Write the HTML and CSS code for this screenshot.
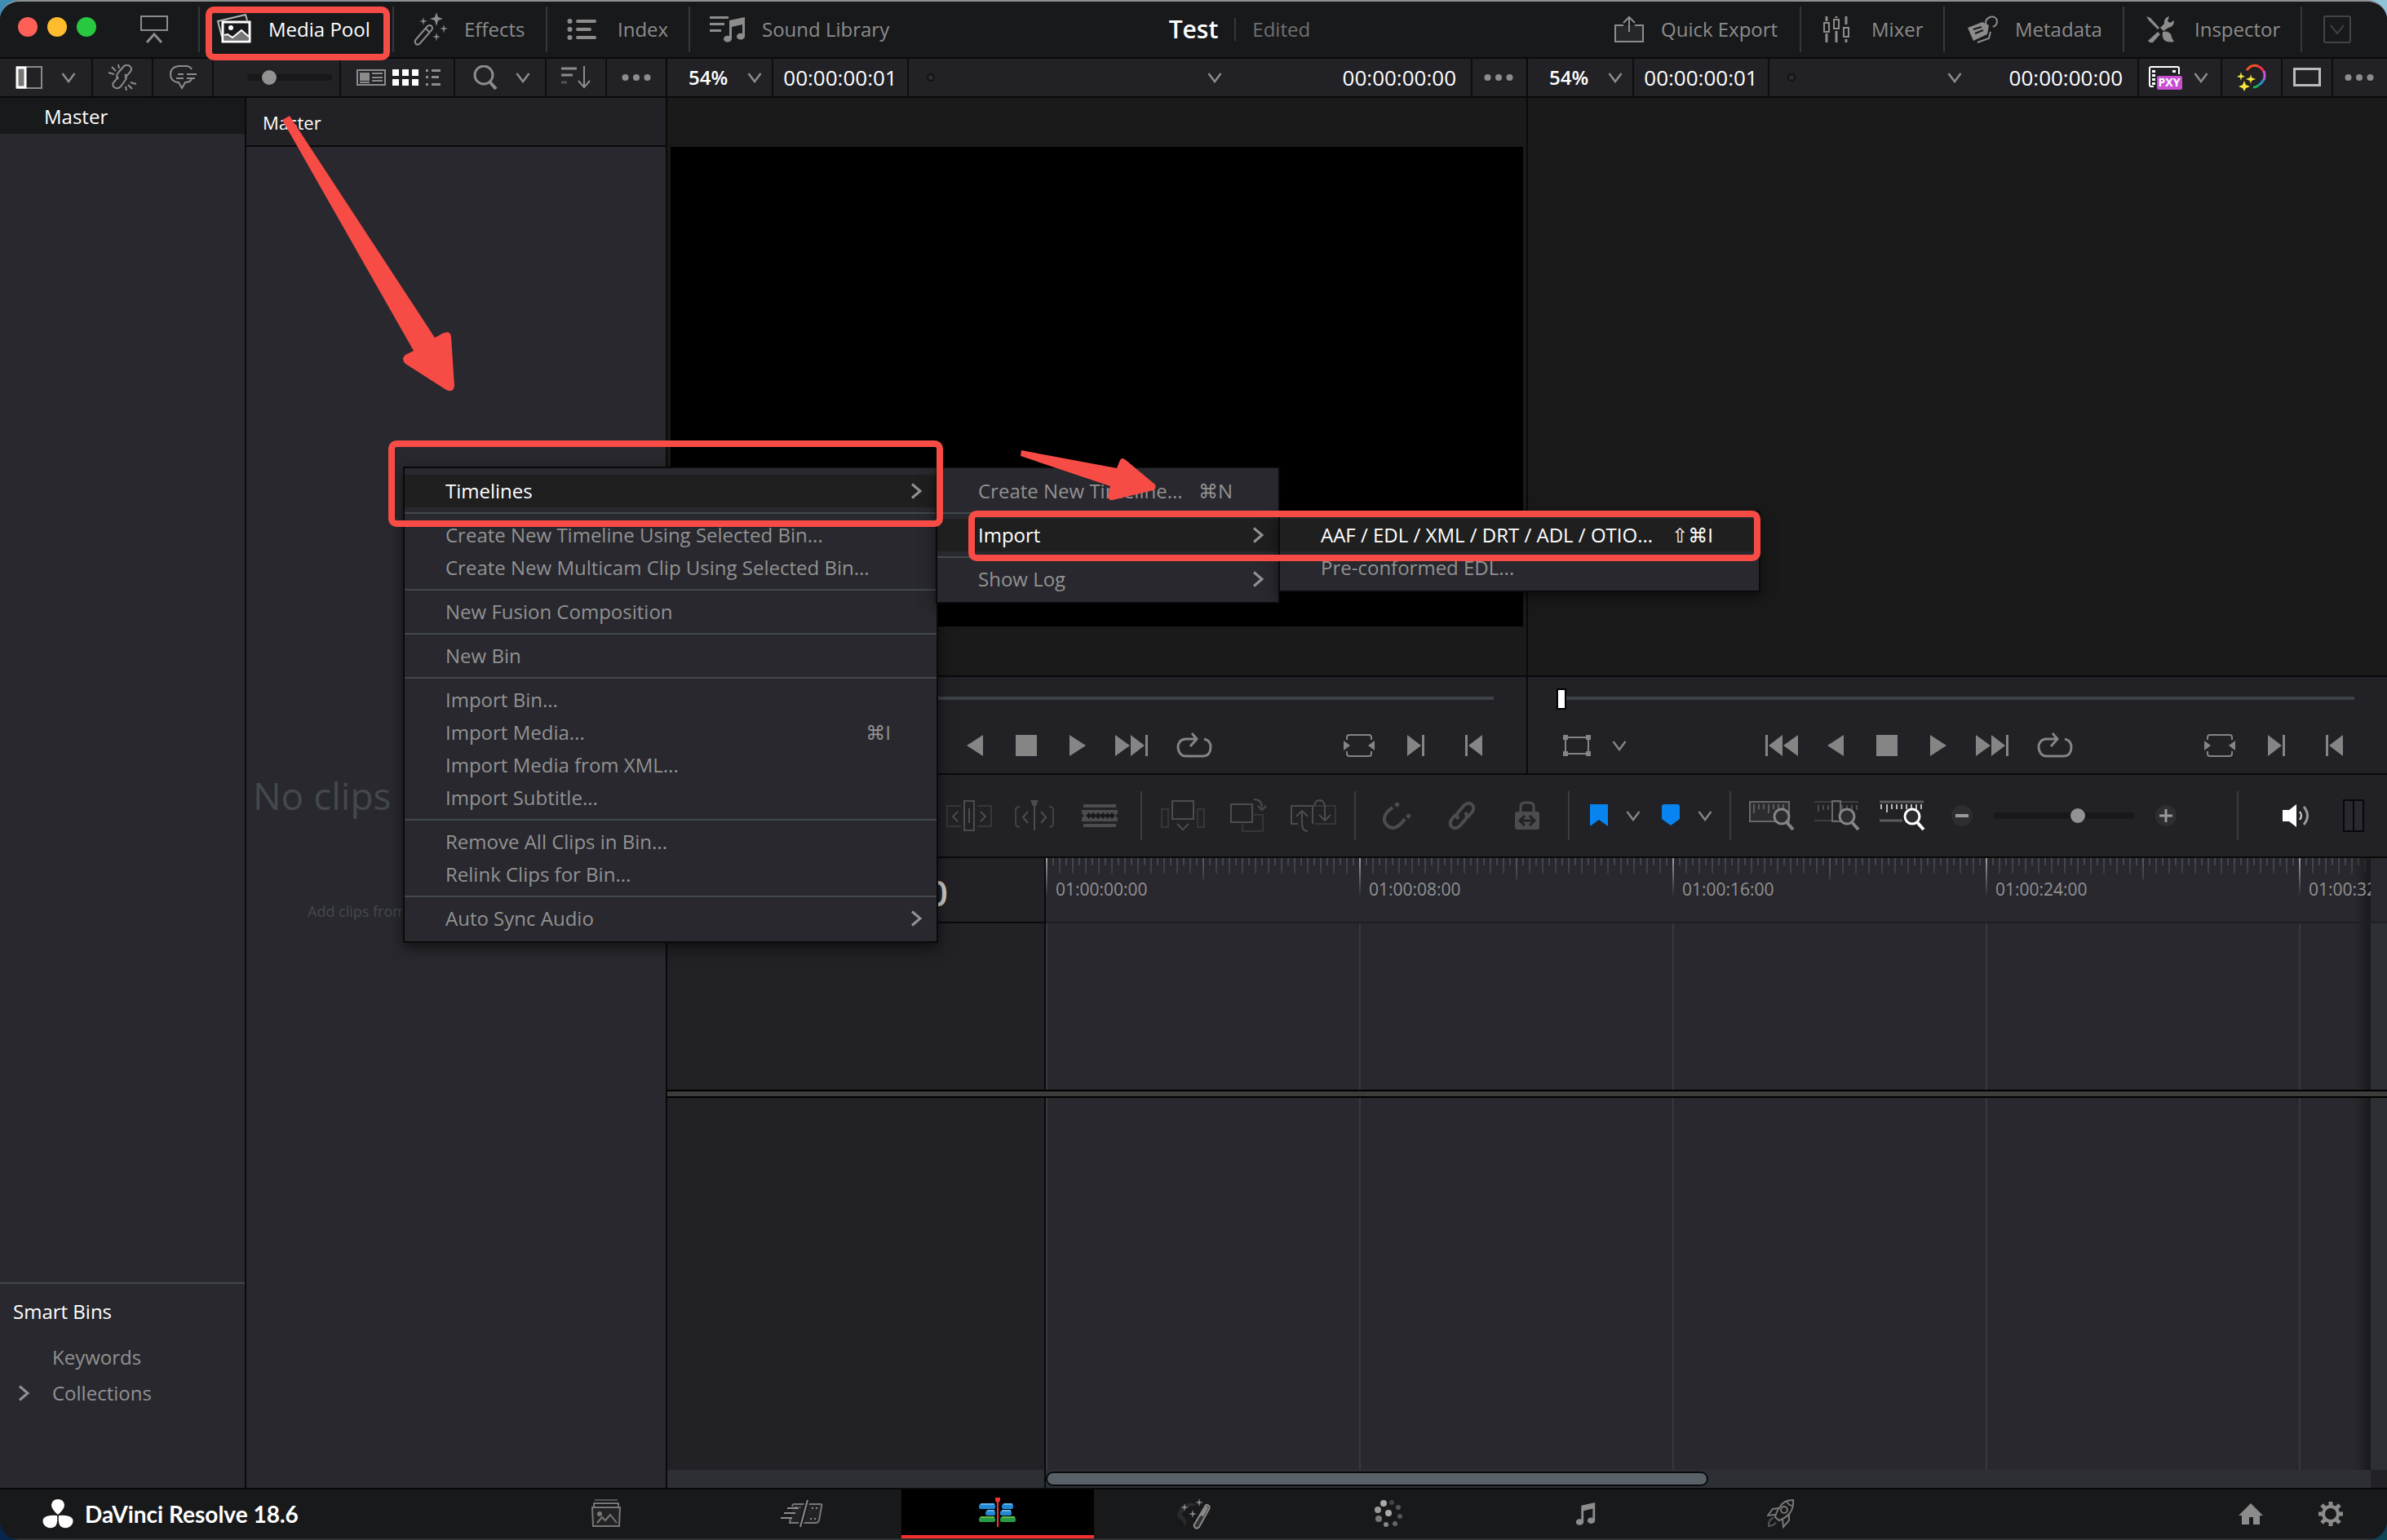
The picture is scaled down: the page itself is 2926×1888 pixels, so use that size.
FILE: index.html
```html
<!DOCTYPE html>
<html lang="en">
<head>
<meta charset="utf-8">
<title>Test - DaVinci Resolve</title>
<link rel="stylesheet" href="styles.css">
</head>
<body>
<svg class="sprite" aria-hidden="true">
  <symbol id="chev" viewBox="0 0 18 14"><path d="M1.500 2l7.500 10 7.500-10" fill="none" stroke="currentColor" stroke-width="2.500"/></symbol>
  <symbol id="chev-r" viewBox="0 0 14 20"><path d="M2 1.500l10 8.500-10 8.500" fill="none" stroke="currentColor" stroke-width="3"/></symbol>
  <symbol id="dots" viewBox="0 0 36 10"><g fill="currentColor"><circle cx="4.500" cy="5" r="4"/><circle cx="18" cy="5" r="4"/><circle cx="31.500" cy="5" r="4"/></g></symbol>
  <symbol id="first" viewBox="0 0 42 26"><path d="M1 0h3v26H1zM22 0v26L5 13zM41 0v26L23 13z" fill="currentColor"/></symbol>
  <symbol id="back" viewBox="0 0 20 26"><path d="M20 0v26L0 13z" fill="currentColor"/></symbol>
  <symbol id="stop" viewBox="0 0 26 26"><path d="M0 0h26v26H0z" fill="currentColor"/></symbol>
  <symbol id="play" viewBox="0 0 20 26"><path d="M0 0v26l20-13z" fill="currentColor"/></symbol>
  <symbol id="last" viewBox="0 0 42 26"><path d="M38 0h3v26h-3zM20 0v26l17-13zM1 0v26l18-13z" fill="currentColor"/></symbol>
  <symbol id="loop" viewBox="0 0 44 32"><path d="M13 8h-1.500C5 8 2 13 2 18s3 11 9.500 11h21C39 29 42 24 42 18S39 9 34 8M12 8h12M19 1l6 7-8 9" fill="none" stroke="currentColor" stroke-width="3"/></symbol>
  <symbol id="match" viewBox="0 0 40 28"><path d="M5 7V4q0-3 3-3h24q3 0 3 3v3M5 21v3q0 3 3 3h24q3 0 3-3v-3" fill="none" stroke="currentColor" stroke-width="2"/><path d="M1 8l8 6-8 6zM39 8l-8 6 8 6z" fill="currentColor"/></symbol>
  <symbol id="next" viewBox="0 0 22 26"><path d="M0 0v26l17-13zM18 0h3v26h-3z" fill="currentColor"/></symbol>
  <symbol id="prev" viewBox="0 0 22 26"><path d="M22 0v26L5 13zM1 0h3v26H1z" fill="currentColor"/></symbol>
  <symbol id="crop" viewBox="0 0 36 28"><path d="M4 4h28v20H4z" fill="none" stroke="currentColor" stroke-width="2"/><path d="M1 1h6v6H1zM29 1h6v6h-6zM1 21h6v6H1zM29 21h6v6h-6z" fill="currentColor"/></symbol>
  <symbol id="note" viewBox="0 0 28 32"><path d="M9 5l18-4v23a5 4 0 1 1-3-3V9l-12 3v15a5 4 0 1 1-3-4z" fill="currentColor"/></symbol>
  <symbol id="lens" viewBox="0 0 28 30"><circle cx="12" cy="12" r="9" fill="#2b2b30" stroke="currentColor" stroke-width="3"/><path d="M18 19l8 9" stroke="currentColor" stroke-width="4"/></symbol>
</svg>

<div class="window">
  <header class="titlebar">
    <div class="bar-left">
      <div class="lights"><i class="red"></i><i class="amber"></i><i class="green"></i></div>
      <button class="display" aria-label="Display"><svg width="36" height="36" viewBox="0 0 36 36"><path d="M2 2h32v17H2z" fill="none" stroke="currentColor" stroke-width="2"/><path d="M9 34l9-10 9 10" fill="none" stroke="currentColor" stroke-width="3"/></svg></button>
      <button class="tab tab-media on"><svg width="44" height="38" viewBox="0 0 44 38"><path d="M7 28L2 9l34-8 2 7" fill="none" stroke="#b5b5b5" stroke-width="2"/><path d="M8 10h33v24H8z" fill="#18191b" stroke="#fff" stroke-width="3"/><circle cx="18" cy="17" r="3" fill="#fff"/><path d="M10 32v-6l4-1 6 4 11-9 9 8v4z" fill="#777"/><path d="M10 26l4-1 6 4 11-9 9 8" fill="none" stroke="#fff" stroke-width="2"/></svg>Media Pool</button>
      <button class="tab tab-effects"><svg width="42" height="42" viewBox="0 0 42 42"><path d="M3 39q-3-3 1-7l13-15q3-2 5 0t0 5L8 38q-3 3-5 1zM15 20l4 4" fill="none" stroke="currentColor" stroke-width="2"/><path d="M28 0l2 6 6 2-6 2-2 7-2-7-6-2 6-2zM12 6l1 4 4 1-4 1-1 4-1-4-4-1 4-1zM37 15l1 4 4 1-4 1-1 5-1-5-4-1 4-1zM28 25l1 4 4 1-4 1-1 5-1-5-4-1 4-1z" fill="currentColor"/></svg>Effects</button>
      <button class="tab tab-index"><svg width="36" height="28" viewBox="0 0 36 28"><g fill="currentColor"><circle cx="3.500" cy="4" r="3"/><circle cx="3.500" cy="14" r="3"/><circle cx="3.500" cy="24" r="3"/><rect x="11" y="2" width="25" height="4" rx="2"/><rect x="11" y="12" width="19" height="4" rx="2"/><rect x="11" y="22" width="25" height="4" rx="2"/></g></svg>Index</button>
      <button class="tab tab-sound"><svg width="44" height="34" viewBox="0 0 44 34"><path d="M0 1h23v3H0zM0 9h18v3H0zM0 17h14v3H0z" fill="currentColor"/><path d="M24 6l19-4v24a5 4 0 1 1-3-4V11l-13 3v15a5 4 0 1 1-3-4z" fill="currentColor"/></svg>Sound Library</button>
    </div>
    <h1>Test</h1>
    <div class="bar-right">
      <span class="edited">Edited</span>
      <button class="tab tab-export"><svg width="38" height="34" viewBox="0 0 38 34"><path d="M12 12H2v20h34V12H26" fill="#26272a" stroke="currentColor" stroke-width="2"/><path d="M19 20V3M12 9l7-7 7 7" fill="none" stroke="currentColor" stroke-width="2"/></svg>Quick Export</button>
      <button class="tab tab-mixer"><svg width="34" height="34" viewBox="0 0 34 34"><path d="M5 1v6M5 22v11M17 1v2M17 19v14M29 1v10M29 29v4" stroke="currentColor" stroke-width="3"/><path d="M2 9h6v11H2zM14 5h6v11h-6zM26 15h6v11h-6z" fill="none" stroke="currentColor" stroke-width="2"/></svg>Mixer</button>
      <button class="tab tab-meta"><svg width="40" height="34" viewBox="0 0 40 34"><path d="M2 15L20 8l8 4-2 11L9 31z" fill="currentColor"/><path d="M9 17l10-3M11 22l10-4" stroke="#18191b" stroke-width="2"/><path d="M30 20l-2 8-14 5M26 14q-5-8 3-12 8-2 9 5 0 5-5 7" fill="none" stroke="currentColor" stroke-width="2"/></svg>Metadata</button>
      <button class="tab tab-inspector"><svg width="36" height="34" viewBox="0 0 36 34"><path d="M1 1l5 2 11 12-2 2L4 6zM15 20l3 3-9 10q-4 1-6-2zM18 15l5-5q-1-7 6-9l-2 6 3 2 5-3q0 8-7 9l-6 4z" fill="currentColor"/><path d="M21 20q6-2 10 3 1 5 4 9-9 2-13-3-2-4-1-9z" fill="currentColor"/></svg>Inspector</button>
      <button class="expand" aria-label="Expand"><svg width="36" height="34" viewBox="0 0 36 34"><rect x="2" y="1" width="32" height="32" rx="2" fill="none" stroke="currentColor" stroke-width="2"/><path d="M10 12l8 10 8-10" fill="none" stroke="currentColor" stroke-width="2"/></svg></button>
    </div>
  </header>

  <main class="workspace">
    <section class="pool">
      <div class="toolbar">
        <button class="cell c-panel" aria-label="Bin list"><svg width="34" height="28" viewBox="0 0 34 28"><path d="M2 1h30v26H2z" fill="none" stroke="#8a8a8a" stroke-width="2"/><path d="M2 2h10v24H2z" fill="#777" stroke="#fff" stroke-width="3"/></svg><svg width="18" height="14"><use href="#chev"/></svg></button>
        <button class="cell c-std" aria-label="Unlink"><svg width="36" height="32" viewBox="0 0 36 32"><path d="M13 18q-4-3 0-8l6-7q4-4 8-1t0 8l-6 6M21 12q4 3 0 8l-5 7q-4 4-8 1t1-8l4-5M1 10l7 2M5 3l5 5M13 0l1 5M35 24l-7-2M30 30l-5-5M23 32l-1-5" fill="none" stroke="currentColor" stroke-width="2"/></svg></button>
        <button class="cell c-std" aria-label="Comments"><svg width="34" height="30" viewBox="0 0 34 30"><path d="M28 5q-2-4-7-4h-9Q2 2 2 11q0 8 8 10h2l4 7 4-7q6 0 8-4" fill="none" stroke="currentColor" stroke-width="2"/><path d="M11 11h7M22 11h12M9 16h9M22 16h10" stroke="currentColor" stroke-width="2"/></svg></button>
        <div class="cell c-size"><input class="slider" type="range" aria-label="Thumbnail size" min="0" max="100" value="21"></div>
        <div class="cell c-views">
          <button aria-label="Metadata view"><svg width="36" height="20" viewBox="0 0 36 20"><path d="M1 1h34v18H1z" fill="none" stroke="currentColor" stroke-width="2"/><path d="M4 4h12v10H4zM19 4h13v2H19zM19 9h13v2H19zM19 13h13v2H19zM4 15h12v2H4z" fill="currentColor"/></svg></button>
          <button class="on" aria-label="Thumbnail view"><svg width="32" height="20" viewBox="0 0 32 20"><path d="M0 0h8v8H0zM12 0h8v8h-8zM24 0h8v8h-8zM0 12h8v8H0zM12 12h8v8h-8zM24 12h8v8h-8z" fill="#fff"/></svg></button>
          <button aria-label="List view"><svg width="20" height="20" viewBox="0 0 20 20"><path d="M1 0h3v3H1zM8 0h11v3H8zM1 8h3v3H1zM8 8h9v3H8zM1 17h3v3H1zM8 17h11v3H8z" fill="currentColor"/></svg></button>
        </div>
        <button class="cell c-search" aria-label="Search"><svg width="30" height="30" viewBox="0 0 30 30"><circle cx="13" cy="12" r="11" fill="none" stroke="currentColor" stroke-width="3"/><path d="M20 20l8 9" stroke="currentColor" stroke-width="4"/></svg><svg width="18" height="14"><use href="#chev"/></svg></button>
        <button class="cell c-std" aria-label="Sort"><svg width="36" height="28" viewBox="0 0 36 28"><path d="M0 3h19M0 11h14" stroke="currentColor" stroke-width="3"/><path d="M0 20h7" stroke="#555" stroke-width="3"/><path d="M28 0v25M21 18l7 8 7-8" fill="none" stroke="currentColor" stroke-width="2"/></svg></button>
        <button class="cell c-last" aria-label="Options"><svg width="36" height="10"><use href="#dots"/></svg></button>
      </div>
      <div class="pool-body">
        <nav class="bins">
          <a class="bin-master" href="#master">Master</a>
          <div class="smart">
            <h2>Smart Bins</h2>
            <a href="#keywords">Keywords</a>
            <a href="#collections"><svg width="14" height="20"><use href="#chev-r"/></svg>Collections</a>
          </div>
        </nav>
        <div class="clips">
          <h2>Master</h2>
          <div class="empty"><p class="big">No clips in media pool</p><p class="small">Add clips from Media Storage to get started</p></div>
        </div>
      </div>
    </section>

    <div class="right">
      <div class="viewers">
        <section class="viewer">
          <div class="toolbar">
            <label class="cell v-zoom"><select aria-label="Source zoom"><option>54%</option></select><svg width="18" height="14"><use href="#chev"/></svg></label>
            <div class="cell v-tc">00:00:00:01</div>
            <div class="cell v-name"><i class="dot"></i><button class="pick far" aria-label="Clip"><svg width="18" height="14"><use href="#chev"/></svg></button><span>00:00:00:00</span></div>
            <button class="cell v-dots" aria-label="Options"><svg width="36" height="10"><use href="#dots"/></svg></button>
          </div>
          <div class="screen"><div class="frame"></div></div>
          <div class="controls">
            <input class="scrub" type="range" aria-label="Source position" value="0">
            <div class="transport">
              <div class="t-left"><button class="s48" aria-label="Crop"><svg width="36" height="28"><use href="#crop"/></svg></button><button class="s56" aria-label="Crop mode"><svg width="18" height="14"><use href="#chev"/></svg></button></div>
              <button class="s66" aria-label="First"><svg width="42" height="26"><use href="#first"/></svg></button><button class="s66" aria-label="Reverse"><svg width="20" height="26"><use href="#back"/></svg></button><button class="s60" aria-label="Stop"><svg width="26" height="26"><use href="#stop"/></svg></button><button class="s66" aria-label="Play"><svg width="20" height="26"><use href="#play"/></svg></button><button class="s66" aria-label="Last"><svg width="42" height="26"><use href="#last"/></svg></button><button class="s88" aria-label="Loop"><svg width="44" height="32"><use href="#loop"/></svg></button>
              <div class="t-right"><button class="s70" aria-label="Match frame"><svg width="40" height="28"><use href="#match"/></svg></button><button class="s70" aria-label="Mark in"><svg width="22" height="26"><use href="#next"/></svg></button><button class="s70" aria-label="Mark out"><svg width="22" height="26"><use href="#prev"/></svg></button></div>
            </div>
          </div>
        </section>
        <section class="viewer">
          <div class="toolbar">
            <label class="cell v-zoom"><select aria-label="Timeline zoom"><option>54%</option></select><svg width="18" height="14"><use href="#chev"/></svg></label>
            <div class="cell v-tc">00:00:00:01</div>
            <div class="cell v-name"><i class="dot"></i><button class="pick" aria-label="Timeline"><svg width="18" height="14"><use href="#chev"/></svg></button><span>00:00:00:00</span></div>
            <button class="cell v-proxy" aria-label="Proxy"><svg width="42" height="30" viewBox="0 0 42 30"><path d="M7 26H4q-2 0-2-2V4q0-2 2-2h32q2 0 2 2v7" fill="none" stroke="#fff" stroke-width="2"/><path d="M5 6h4v3H5zM5 11h4v3H5zM5 16h4v3H5zM5 21h4v3H5zM30 6h4v3h-4z" fill="#fff"/><rect x="11" y="13" width="31" height="17" rx="2" fill="#c84fd2"/><text class="pxy" x="26" y="26" text-anchor="middle">PXY</text></svg><svg width="18" height="14"><use href="#chev"/></svg></button>
            <button class="cell v-wheel" aria-label="Bypass grades"><svg width="38" height="34" viewBox="0 0 38 34"><g fill="none" stroke-width="3"><path d="M12 8Q18 0 26 3" stroke="#f35325"/><path d="M25 3q5 1 8 7" stroke="#f0304a"/><path d="M33 9q2 6 0 11" stroke="#c455d8"/><path d="M33 19q-2 5-6 7" stroke="#2f8fd0"/><path d="M27 26q-3 3-7 3" stroke="#18b05a"/></g><path d="M5 10l1 4 4 2-4 1-1 4-1-4-4-1 4-2zM17 13l1 4 5 2-5 2-1 4-1-4-5-2 5-2zM9 21l2 5 5 2-5 2-2 4-2-4-5-2 5-2z" fill="#f5e63c"/></svg></button>
            <button class="cell v-rect" aria-label="Single viewer"><svg width="34" height="24" viewBox="0 0 34 24"><path d="M1.500 1.500h31v20h-31z" fill="none" stroke="#bbb" stroke-width="3"/></svg></button>
            <button class="cell v-dots" aria-label="Options"><svg width="36" height="10"><use href="#dots"/></svg></button>
          </div>
          <div class="screen"></div>
          <div class="controls">
            <input class="scrub" type="range" aria-label="Timeline position" value="0">
            <div class="transport">
              <div class="t-left"><button class="s48" aria-label="Crop"><svg width="36" height="28"><use href="#crop"/></svg></button><button class="s56" aria-label="Crop mode"><svg width="18" height="14"><use href="#chev"/></svg></button></div>
              <button class="s66" aria-label="First"><svg width="42" height="26"><use href="#first"/></svg></button><button class="s66" aria-label="Reverse"><svg width="20" height="26"><use href="#back"/></svg></button><button class="s60" aria-label="Stop"><svg width="26" height="26"><use href="#stop"/></svg></button><button class="s66" aria-label="Play"><svg width="20" height="26"><use href="#play"/></svg></button><button class="s66" aria-label="Last"><svg width="42" height="26"><use href="#last"/></svg></button><button class="s88" aria-label="Loop"><svg width="44" height="32"><use href="#loop"/></svg></button>
              <div class="t-right"><button class="s70" aria-label="Match frame"><svg width="40" height="28"><use href="#match"/></svg></button><button class="s70" aria-label="Mark in"><svg width="22" height="26"><use href="#next"/></svg></button><button class="s70" aria-label="Mark out"><svg width="22" height="26"><use href="#prev"/></svg></button></div>
            </div>
          </div>
        </section>
      </div>

      <div class="edit-tools">
        <div class="group off">
          <button aria-label="Trim"><svg width="56" height="38" viewBox="0 0 56 38"><path d="M18 7H1v25h17M38 7h17v25H38" fill="none" stroke="#35353a" stroke-width="2"/><path d="M14 14l-6 6 6 6M42 14l6 6-6 6M22 1h12v36H22zM28 10v18" fill="none" stroke="currentColor" stroke-width="2"/></svg></button>
          <button aria-label="Dynamic trim"><svg width="52" height="38" viewBox="0 0 52 38"><path d="M8 8q-5 0-5 4v16q0 5 5 5M44 8q5 0 5 4v16q0 5-5 5" fill="none" stroke="#414146" stroke-width="2"/><path d="M18 14l-6 7 6 7M34 14l6 7-6 7M26 4v33" fill="none" stroke="currentColor" stroke-width="2"/><path d="M21 0h10l-3 7h-4z" fill="currentColor"/></svg></button>
          <button aria-label="Blade"><svg width="44" height="28" viewBox="0 0 44 28"><path d="M2 0h40v4H2zM2 24h40v4H2zM0 7h44v4l-3 3 3 3v4H0v-4l3-3-3-3z" fill="currentColor"/><path d="M5 14l4-4 2 3 3-3 3 3 3-3 3 3 3-3 3 3 3-3 2 3 3-3 4 4-4 4-3-3-2 3-3-3-3 3-3-3-3 3-3-3-3 3-3-3-2 3z" fill="#18181b"/></svg></button>
        </div>
        <i class="sep"></i>
        <div class="group off">
          <button aria-label="Insert"><svg width="56" height="38" viewBox="0 0 56 38"><path d="M2 11h8v22H2zM46 11h8v22h-8z" fill="none" stroke="#35353a" stroke-width="2"/><path d="M15 1h26v22H15zM21 29l7 7 7-7" fill="none" stroke="currentColor" stroke-width="2"/></svg></button>
          <button aria-label="Overwrite"><svg width="46" height="42" viewBox="0 0 46 42"><path d="M30 20h11v20H16v-9" fill="none" stroke="#35353a" stroke-width="2"/><path d="M2 7h26v22H2zM30 1q10 0 10 10M35 9l5 5 5-5" fill="none" stroke="currentColor" stroke-width="2"/></svg></button>
          <button aria-label="Replace"><svg width="58" height="42" viewBox="0 0 58 42"><path d="M28 9h28v22H30" fill="none" stroke="#35353a" stroke-width="2"/><path d="M10 31H2V9h26v22M8 22l7-7 7 7M15 16v14q0 10 7 10M30 9q1-7 7-7 6 1 6 9v15M36 20l7 7 7-7" fill="none" stroke="currentColor" stroke-width="2"/></svg></button>
        </div>
        <i class="sep"></i>
        <div class="group off">
          <button aria-label="Snapping"><svg width="36" height="36" viewBox="0 0 36 36"><path d="M13 8Q2 15 3 24q3 9 11 9 7-1 14-11" fill="none" stroke="currentColor" stroke-width="4"/><path d="M18 1l4 3-3 4-4-3zM32 15l4 3-3 4-4-3z" fill="currentColor"/></svg></button>
          <button aria-label="Link"><svg width="34" height="36" viewBox="0 0 34 36"><path d="M13 22q-4-4 0-9l7-8q5-4 9-1t1 9l-6 7M21 14q4 4 0 9l-7 8q-5 4-9 1t-1-9l6-7" fill="none" stroke="currentColor" stroke-width="4"/></svg></button>
          <button aria-label="Lock"><svg width="32" height="36" viewBox="0 0 32 36"><path d="M8 14V7q0-5 5-5h6q5 0 5 5v7" fill="none" stroke="currentColor" stroke-width="3"/><rect x="1" y="13" width="30" height="22" rx="3" fill="currentColor"/><path d="M13 18l-6 6 6 6M19 18l6 6-6 6M8 24h16" fill="none" stroke="#212126" stroke-width="3"/></svg></button>
        </div>
        <i class="sep"></i>
        <div class="pair"><button class="s52" aria-label="Flag"><svg width="24" height="30" viewBox="0 0 24 30"><path d="M1 1h22v27l-11-8-11 8z" fill="#0884f0"/></svg></button><button class="s32" aria-label="Flag color"><svg width="18" height="14"><use href="#chev"/></svg></button></div>
        <div class="pair"><button class="s52" aria-label="Marker"><svg width="24" height="30" viewBox="0 0 24 30"><path d="M1 4q0-3 3-3h16q3 0 3 3v15l-11 8-11-8z" fill="#0884f0"/></svg></button><button class="s32" aria-label="Marker color"><svg width="18" height="14"><use href="#chev"/></svg></button></div>
        <i class="sep"></i>
        <div class="group">
          <button aria-label="Full extent zoom"><svg width="56" height="38" viewBox="0 0 56 38"><path d="M1 2h48v24H1z" fill="#2b2b30" stroke="#68686c" stroke-width="2"/><path d="M6 5v11M12 5v6M18 5v6M24 5v11M30 5v6M36 5v6M42 5v8" stroke="#5c5c60" stroke-width="2"/><svg x="28" y="8" width="28" height="30"><use href="#lens"/></svg></svg></button>
          <button aria-label="Detail zoom"><svg width="56" height="38" viewBox="0 0 56 38"><path d="M0 2h54M0 25h28" stroke="#3c3c41" stroke-width="2"/><path d="M5 6v8M11 6v6M17 6v6M34 6v6M40 6v6M46 6v6M52 6v6" stroke="#4c4c50" stroke-width="2"/><path d="M22 1h10v25H22z" fill="none" stroke="#68686c" stroke-width="2"/><svg x="28" y="8" width="28" height="30"><use href="#lens"/></svg></svg></button>
          <button class="on" aria-label="Custom zoom"><svg width="56" height="38" viewBox="0 0 56 38"><path d="M0 2h54M0 25h28" stroke="#5a5a5f" stroke-width="3"/><path d="M2 5v6M9 5v10M15 5v6M21 5v6M27 5v6M33 5v6M39 5v6M45 5v6M51 5v6" stroke="#bbb" stroke-width="2"/><svg x="28" y="8" width="28" height="30"><use href="#lens"/></svg></svg></button>
        </div>
        <button class="s66 round" aria-label="Zoom out"><svg width="28" height="28" viewBox="0 0 28 28"><circle cx="14" cy="14" r="13" fill="#2d2d32"/><path d="M6 14h16" stroke="#999" stroke-width="4"/></svg></button>
        <input class="slider wide" type="range" aria-label="Timeline scale" min="0" max="100" value="61">
        <button class="s66 round" aria-label="Zoom in"><svg width="28" height="28" viewBox="0 0 28 28"><circle cx="14" cy="14" r="13" fill="#2d2d32"/><path d="M6 14h16M14 6v16" stroke="#999" stroke-width="3"/></svg></button>
        <i class="sep push"></i>
        <button class="speaker on" aria-label="Mute"><svg width="36" height="28" viewBox="0 0 36 28"><path d="M1 7h8l9-7v28l-9-7H1z" fill="#fff"/><path d="M22 9q4 5 0 10" fill="none" stroke="#ddd" stroke-width="2"/><path d="M27 3q9 11 0 22" fill="none" stroke="#999" stroke-width="3"/></svg></button>
        <div class="meter"><i></i><i></i></div>
      </div>

      <div class="timeline">
        <div class="head-top">01:00:00:00</div>
        <div class="ruler"><span>01:00:00:00</span><span>01:00:08:00</span><span>01:00:16:00</span><span>01:00:24:00</span><span>01:00:32:00</span></div>
        <div class="corner"></div>
        <div class="head"></div><div class="lane"></div><div class="vbar"></div>
        <div class="split"></div>
        <div class="head"></div><div class="lane"></div><div class="vbar"></div>
        <div class="foot"></div><div class="hbar"><div class="thumb"></div></div><div class="foot dark"></div>
      </div>
    </div>
  </main>

  <footer class="pages">
    <div class="brand"><svg width="38" height="36" viewBox="0 0 38 36"><path d="M19 19Q11 12 11 7q1-7 8-7t8 7q0 5-8 12zM18 20q1 9-2 13-5 4-11 1-6-4-4-10 4-5 17-4zM20 20q-1 9 2 13 5 4 11 1 6-4 4-10-4-5-17-4z" fill="#fff"/></svg>DaVinci Resolve 18.6</div>
    <nav>
      <a href="#media" aria-label="Media"><svg width="38" height="36" viewBox="0 0 38 36"><path d="M5 1h28" stroke="#555" stroke-width="2"/><path d="M4 9V5h30v4" fill="none" stroke="#777" stroke-width="2"/><path d="M2 10h34l-1 23H3z" fill="#232326" stroke="#777" stroke-width="2"/><circle cx="11" cy="18" r="3" fill="#777"/><path d="M8 29l6-7 4 4 6-7 8 10" fill="none" stroke="#777" stroke-width="2"/></svg></a>
      <a href="#cut" aria-label="Cut"><svg width="52" height="36" viewBox="0 0 52 36"><path d="M15 6h34q2 0 1 3l-3 17q-1 3-4 3H11l1-6M15 6l-1 3" fill="#232326" stroke="#777" stroke-width="2"/><path d="M8 11h14M4 17h14M0 23h14" stroke="currentColor" stroke-width="2"/><path d="M38 11h8M36 24h8M18 10h6" stroke="currentColor" stroke-width="2" stroke-dasharray="2 3"/><path d="M33 1l-9 33" stroke="#18191b" stroke-width="6"/><path d="M33 1l-9 33" stroke="currentColor" stroke-width="2"/></svg></a>
      <a class="current" href="#edit" aria-label="Edit"><svg width="46" height="36" viewBox="0 0 46 36"><rect y="8" width="20" height="6" rx="2" fill="#2387d2"/><rect x="28" y="8" width="14" height="6" rx="2" fill="#2387d2"/><rect x="8" y="16" width="12" height="6" rx="2" fill="#2387d2"/><rect x="26" y="16" width="14" height="6" rx="2" fill="#2387d2"/><rect y="24" width="20" height="6" rx="2" fill="#279a48"/><rect x="26" y="24" width="19" height="6" rx="2" fill="#279a48"/><path d="M2 8h17M30 8h11M10 16h9M28 16h11" stroke="#62b2ec" stroke-width="2"/><path d="M2 24h17M28 24h16" stroke="#68b944" stroke-width="2"/><path d="M23 2v34" stroke="#f8302c" stroke-width="2"/><path d="M20 0h6v4l-3 3-3-3z" fill="#f8302c"/></svg></a>
      <a href="#fusion" aria-label="Fusion"><svg width="44" height="38" viewBox="0 0 44 38"><path d="M8 10q10-8 18-2Q10 10 8 20q8 8 3 14Q10 26 3 24 0 18 8 10z" fill="#2b2b2e"/><path d="M39 8q4 1 2 5L29 35q-3 3-5 1t-1-4L36 10q1-3 3-2z" fill="#333" stroke="currentColor" stroke-width="2"/><path d="M38 9l2 2-6 11-4-1z" fill="currentColor"/><path d="M29 0l1 4 4 1-4 1-1 4-1-4-4-1 4-1zM11 6l1 4 4 1-4 1-1 4-1-4-4-1 4-1zM21 14l1 4 4 1-4 1-1 4-1-4-4-1 4-1z" fill="currentColor"/></svg></a>
      <a href="#color" aria-label="Color"><svg width="36" height="36" viewBox="0 0 36 36"><circle cx="17" cy="17" r="4" fill="#aaa"/><circle cx="11" cy="5" r="4" fill="#aaa"/><circle cx="21" cy="4" r="3" fill="#444"/><circle cx="29" cy="10" r="3" fill="#555"/><circle cx="31" cy="21" r="3" fill="#555"/><circle cx="25" cy="30" r="3" fill="#666"/><circle cx="14" cy="31" r="3" fill="#888"/><circle cx="5" cy="24" r="4" fill="#777"/><circle cx="4" cy="13" r="4" fill="#999"/></svg></a>
      <a href="#fairlight" aria-label="Fairlight"><svg width="28" height="30"><use href="#note"/></svg></a>
      <a href="#deliver" aria-label="Deliver"><svg width="34" height="36" viewBox="0 0 34 36"><path d="M32 1q-11 0-16 8-5 7-6 13l5 4q8-3 13-9 5-7 4-16zM14 11l-7 1-6 8 9-1M27 18v8l-7 8-1-10M24 2q2 6 8 6" fill="none" stroke="#777" stroke-width="2"/><circle cx="21" cy="13" r="4" fill="none" stroke="#777" stroke-width="2"/><path d="M8 23q-6 1-6 10 8-1 9-5" fill="none" stroke="#555" stroke-width="2"/></svg></a>
    </nav>
    <div class="settings">
      <button aria-label="Project manager"><svg width="30" height="26" viewBox="0 0 30 26"><path d="M15 0l15 15h-4v11h-8v-9h-5v9H4V15H0z" fill="currentColor"/></svg></button>
      <button aria-label="Project settings"><svg width="30" height="30" viewBox="0 0 30 30"><circle cx="15" cy="15" r="9" fill="none" stroke="currentColor" stroke-width="4"/><path d="M15 0v6M15 24v6M0 15h6M24 15h6M4 4l5 5M21 21l5 5M26 4l-5 5M9 21l-5 5" stroke="currentColor" stroke-width="5"/></svg></button>
    </div>
  </footer>
</div>

<ul class="menu menu-main">
  <li class="hot"><button>Timelines<svg width="14" height="20"><use href="#chev-r"/></svg></button></li>
  <li class="rule"></li>
  <li><button>Create New Timeline Using Selected Bin...</button></li>
  <li><button>Create New Multicam Clip Using Selected Bin...</button></li>
  <li class="rule"></li>
  <li><button>New Fusion Composition</button></li>
  <li class="rule"></li>
  <li><button>New Bin</button></li>
  <li class="rule"></li>
  <li><button>Import Bin...</button></li>
  <li><button>Import Media...<kbd>⌘I</kbd></button></li>
  <li><button>Import Media from XML...</button></li>
  <li><button>Import Subtitle...</button></li>
  <li class="rule"></li>
  <li><button>Remove All Clips in Bin...</button></li>
  <li><button>Relink Clips for Bin...</button></li>
  <li class="rule"></li>
  <li><button>Auto Sync Audio<svg width="14" height="20"><use href="#chev-r"/></svg></button></li>
</ul>
<ul class="menu menu-timelines">
  <li><button>Create New Timeline...<kbd>⌘N</kbd></button></li>
  <li class="rule"></li>
  <li class="hot"><button>Import<svg width="14" height="20"><use href="#chev-r"/></svg></button></li>
  <li class="rule"></li>
  <li><button>Show Log<svg width="14" height="20"><use href="#chev-r"/></svg></button></li>
</ul>
<ul class="menu menu-import">
  <li class="hot"><button>AAF / EDL / XML / DRT / ADL / OTIO...<kbd>⇧⌘I</kbd></button></li>
  <li><button>Pre-conformed EDL...</button></li>
</ul>

<div class="mark mark-pool"></div>
<div class="mark mark-timelines"></div>
<div class="mark mark-import"></div>
<svg class="arrow arrow-long" width="214" height="340" viewBox="0 0 214 340"><path d="M0 7l9-5 178 272 9-5q10-5 11 4l4 60q-1 9-10 5l-50-32q-6-6 0-11l10-5z" fill="#f74b46"/></svg>
<svg class="arrow arrow-short" width="170" height="66" viewBox="0 0 170 66"><path d="M3 2L2 9l110 37-3 13q1 5 6 4l50-12q4-2 2-7L131 14q-5-4-7 0l-4 10z" fill="#f74b46"/></svg>
</body>
</html>
```
FILE: styles.css
```css
* { box-sizing: border-box; }
html { background: linear-gradient(90deg, #3f8db5, #8fc4d8) top / 100% 50% no-repeat, linear-gradient(90deg, #08264d, #0e4656) bottom / 100% 50% no-repeat; }
body { margin: 0; position: relative; font-family: "Open Sans", "DejaVu Sans", sans-serif; font-size: 24px; line-height: 32px; color: #929292; }
h1, h2, p, ul { margin: 0; padding: 0; font-weight: 400; font-size: inherit; }
button, select, kbd { font: inherit; color: inherit; }
button { display: flex; align-items: center; justify-content: center; padding: 0; border: 0; background: none; }
a { color: inherit; text-decoration: none; }
svg { flex: none; display: block; }
.sprite { position: absolute; width: 0; height: 0; }
.on { color: #fff; }

.window { display: flex; flex-direction: column; min-height: 100vh; background: #28282e; border-top: 2px solid #8b9093; border-radius: 24px; overflow: hidden; }

/* Title bar */
.titlebar { display: grid; grid-template-columns: 1fr auto 1fr; height: 70px; background: #18191b; border-bottom: 2px solid #0a0a0a; }
.bar-left, .bar-right { display: flex; align-items: stretch; padding: 6px 0; color: #8c8c8c; }
.titlebar h1 { align-self: center; font-size: 30px; font-weight: 600; color: #fff; }
.lights { display: flex; align-items: center; gap: 12px; padding: 0 48px 6px 22px; }
.lights i { width: 24px; height: 24px; border-radius: 50%; }
.lights .red { background: #fe5f57; }
.lights .amber { background: #febc2e; }
.lights .green { background: #28c840; }
.display { width: 46px; margin-right: 31px; }
.tab { white-space: nowrap; border-left: 2px solid #36373a; gap: 20px; padding-left: 20px; justify-content: flex-start; }
.tab.on { color: #fff; }
.tab-media { width: 238px; }
.tab-effects { width: 188px; padding-left: 24px; }
.tab-index { width: 175px; gap: 26px; padding-left: 24px; }
.tab-sound { padding-left: 24px; }
.edited { align-self: center; margin: 0 auto 0 20px; padding-left: 20px; line-height: 28px; border-left: 2px solid #36373a; color: #707070; }
.bar-right .tab { padding-left: 26px; }
.bar-right .tab-export { border: 0; width: 254px; }
.tab-mixer { width: 176px; gap: 26px; }
.tab-meta { width: 220px; }
.tab-inspector { width: 218px; gap: 24px; }
.expand { width: 106px; padding-right: 18px; border-left: 2px solid #36373a; color: #444; }

.workspace { flex: 1; display: flex; }
.toolbar { display: flex; height: 48px; background: #212126; border-bottom: 2px solid #0a0a0a; color: #8c8c8c; }
.cell { display: flex; align-items: center; justify-content: center; border-right: 2px solid #0e0e10; }

/* Media pool */
.pool { width: 818px; flex: none; display: flex; flex-direction: column; border-right: 2px solid #0a0a0a; }
.c-panel { width: 114px; gap: 22px; }
.c-std { width: 74px; }
.c-size { width: 156px; padding-left: 32px; }
.c-views { width: 140px; gap: 8px; padding-left: 4px; }
.c-search { width: 112px; gap: 22px; padding-left: 4px; }
.c-last { flex: 1; border: 0; }
.pool-body { flex: 1; display: flex; }
.bins { width: 302px; display: flex; flex-direction: column; justify-content: space-between; border-right: 2px solid #0a0a0a; }
.bin-master { padding: 7px 0 5px 54px; background: #18191b; color: #fff; }
.smart { height: 252px; padding: 18px 16px; border-top: 2px solid #41484c; }
.smart h2 { color: #fff; margin-bottom: 18px; }
.smart a { position: relative; display: block; padding: 6px 0 6px 48px; }
.smart svg { position: absolute; left: 6px; top: 12px; }
.clips { flex: 1; display: flex; flex-direction: column; }
.clips h2 { padding: 14px 20px 12px; background: #212126; border-bottom: 2px solid #0a0a0a; color: #fff; font-size: 22px; }
.empty { flex: 1; display: flex; flex-direction: column; align-items: center; justify-content: center; gap: 100px; padding-top: 70px; color: #44484d; white-space: nowrap; }
.big { padding-right: 24px; font-size: 46px; line-height: 60px; }
.small { font-size: 18px; line-height: 24px; }

/* Range inputs */
input { appearance: none; margin: 0; background: none; }
.slider { width: 104px; height: 20px; }
.slider.wide { width: 172px; margin: 0 6px; }
.slider::-webkit-slider-runnable-track { height: 8px; border-radius: 4px; background: #18181a; }
.slider::-webkit-slider-thumb { appearance: none; width: 18px; height: 18px; margin-top: -5px; border-radius: 50%; background: #929292; }
.scrub { height: 28px; margin: 0 40px 0 35px; }
.scrub::-webkit-slider-runnable-track { height: 4px; background: #3e434a; }
.scrub::-webkit-slider-thumb { appearance: none; width: 12px; height: 26px; margin-top: -10px; border: 2px solid #000; background: #fff; }

/* Viewers */
.right { flex: 1; min-width: 0; display: flex; flex-direction: column; }
.viewers { display: flex; }
.viewer { flex: 1 1 0; min-width: 0; display: flex; flex-direction: column; }
.viewer:first-child { border-right: 2px solid #0a0a0a; }
.v-zoom { width: 130px; gap: 16px; padding-left: 26px; justify-content: flex-start; color: #8c8c8c; }
.v-zoom select { appearance: none; width: 56px; padding: 0; border: 0; background: none; color: #fff; font-weight: 600; }
.v-tc { width: 166px; color: #fff; font-size: 26px; font-weight: 500; }
.v-name { flex: 1; padding: 0 18px 0 22px; }
.v-name span { color: #fff; font-size: 26px; font-weight: 500; }
.dot { width: 10px; height: 10px; border: 2px solid #111214; border-radius: 50%; background: #2b2d33; }
.pick { margin: 0 58px 0 auto; }
.pick.far { margin-right: 148px; }
.v-dots { width: 66px; border: 0; padding-right: 2px; }
.v-proxy { width: 102px; gap: 14px; padding-right: 4px; }
.v-wheel { width: 74px; padding-left: 2px; }
.v-rect { width: 62px; }
.pxy { font-size: 14px; font-weight: 700; fill: #fff; }
.screen { flex: 1; padding: 60px 4px; background: #1a1a1a; border-bottom: 2px solid #0a0a0a; }
.frame { aspect-ratio: 16 / 9; background: #000; }
.controls { display: flex; flex-direction: column; height: 120px; padding-top: 12px; background: #212126; border-bottom: 2px solid #0a0a0a; color: #858585; }
.transport { display: flex; align-items: center; flex: 1; padding-top: 10px; }
.t-left { display: flex; width: 278px; padding-left: 36px; }
.t-right { display: flex; margin-left: auto; padding-right: 30px; }
.s32 { width: 32px; }
.s48 { width: 48px; }
.s52 { width: 52px; }
.s56 { width: 56px; }
.s60 { width: 60px; }
.s66 { width: 66px; }
.s70 { width: 70px; }
.s88 { width: 88px; }

/* Edit tools */
.edit-tools { display: flex; align-items: center; height: 102px; padding: 0 28px 0 330px; background: #212126; border-bottom: 2px solid #0a0a0a; color: #858585; }
.group { display: flex; }
.group button { width: 80px; height: 60px; }
.group .on { color: #fff; }
.off { color: #4c4c50; }
.sep { width: 2px; height: 60px; margin: 0 10px; background: #3b3b40; }
.pair { display: flex; margin-right: 4px; }
.push { margin: 0 0 0 auto; }
.speaker { width: 80px; margin: 0 17px 0 31px; }
.meter { display: flex; width: 26px; height: 40px; border: 2px solid #08080a; }
.meter i { flex: 1; background: #28282e; }
.meter i + i { border-left: 2px solid #08080a; }

/* Timeline */
.timeline { flex: 1; display: grid; grid-template-columns: 464px minmax(0, 1fr) 20px; grid-template-rows: 80px 204px 10px 1fr 22px; }
.head-top { padding: 22px 118px 0 0; text-align: right; font-size: 44px; line-height: 40px; font-weight: 600; color: #ccc; background: #212126; border-right: 2px solid #0a0a0a; border-bottom: 2px solid #0a0a0a; }
.head { background: #212126; border-right: 2px solid #0a0a0a; }
.ruler { display: flex; overflow: hidden; padding-top: 22px; font-size: 21px; border-bottom: 2px solid #1f1f23;
  background:
    linear-gradient(270deg, #1a1a1d, transparent) right / 20px 100% no-repeat,
    linear-gradient(#28282e00, #28282e) left top / 100% 48px no-repeat,
    repeating-linear-gradient(90deg, #a0a0a0 0 2px, transparent 2px 384px) left top / 100% 48px no-repeat,
    repeating-linear-gradient(90deg, #555c60 0 2px, transparent 2px 192px) left top / 100% 26px no-repeat,
    repeating-linear-gradient(90deg, #454b50 0 2px, transparent 2px 16px) left top / 100% 19px no-repeat,
    repeating-linear-gradient(90deg, #454b50 0 2px, transparent 2px 8px) left top / 100% 9px no-repeat, #28282e; }
.ruler span { flex: none; width: 384px; padding-left: 12px; }
.corner { border-bottom: 2px solid #1f1f23; }
.lane { background: linear-gradient(270deg, #1a1a1d, transparent) right / 20px 100% no-repeat, repeating-linear-gradient(90deg, #38383c 0 2px, transparent 2px 384px), #28282e; }
.vbar { background: #2c3035; }
.split { grid-column: 1 / -1; background: #3c3c3c; border: solid #000; border-width: 2px 0; }
.foot { background: #2c3035; border-right: 2px solid #0a0a0a; }
.foot.dark { background: #212126; border: 0; }
.hbar { display: flex; align-items: center; background: #2c3035; }
.thumb { width: 50%; height: 18px; border: 2px solid #0a0a0a; border-radius: 9px; background: #586068; }

/* Page navigation */
.pages { display: grid; grid-template-columns: 1fr auto 1fr; height: 64px; background: #18191b; border-top: 2px solid #0a0a0a; border-bottom: 2px solid #2e2f31; color: #8c8c8c; }
.brand { display: flex; align-items: center; gap: 14px; padding-left: 52px; font-family: Lato, "Open Sans", sans-serif; font-size: 28px; font-weight: 700; color: #fff; }
.pages nav { display: flex; }
.pages nav a { display: flex; align-items: center; justify-content: center; width: 236px; margin: 0 2px; }
.pages .current { background: #000; border-bottom: 4px solid #f8302c; }
.settings { display: flex; justify-content: flex-end; align-items: center; gap: 68px; padding-right: 54px; }

/* Context menus */
.menu { position: absolute; list-style: none; padding: 8px 0; background: #28282e; border: 2px solid #0a0a0a; box-shadow: 0 6px 16px #0008; }
.menu button { width: 100%; height: 40px; justify-content: flex-start; padding: 0 18px 0 50px; white-space: nowrap; }
.menu button svg { margin-left: auto; color: #929292; }
.menu kbd { margin: 0 38px 0 auto; }
.hot { background: #1f1f1f; color: #fff; }
.rule { height: 14px; padding-top: 6px; }
.rule::before { content: ""; display: block; height: 2px; background: #41484c; }
.menu-main { left: 494px; top: 572px; width: 656px; }
.menu-timelines { left: 1147px; top: 572px; width: 422px; }
.menu-import { left: 1567px; top: 626px; width: 591px; }

/* Callouts */
.mark { position: absolute; border: 8px solid #f74b46; border-radius: 10px; }
.mark-pool { left: 252px; top: 8px; width: 226px; height: 66px; }
.mark-timelines { left: 476px; top: 540px; width: 680px; height: 106px; }
.mark-import { left: 1187px; top: 626px; width: 971px; height: 62px; }
.arrow { position: absolute; }
.arrow-long { left: 346px; top: 140px; }
.arrow-short { left: 1249px; top: 550px; }
```
